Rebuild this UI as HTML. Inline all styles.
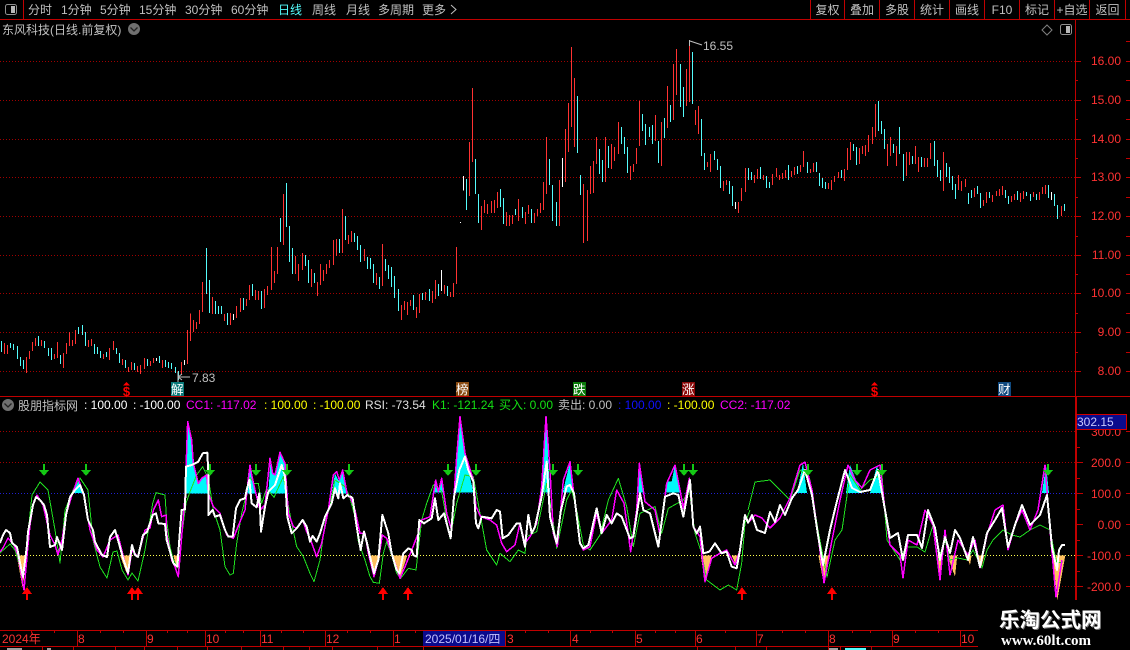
<!DOCTYPE html>
<html><head><meta charset="utf-8"><title>K</title>
<style>
html,body{margin:0;padding:0;background:#000;width:1130px;height:650px;overflow:hidden}
svg{display:block}
text{font-family:"Liberation Sans","WenQuanYi Zen Hei","Noto Sans CJK SC",sans-serif;font-size:12px;fill:#c0c0c0}
.r{fill:#ff3232;text-anchor:end}
.d{fill:#ff3232}
.c{text-anchor:middle}
</style></head><body>
<svg width="1130" height="650" viewBox="0 0 1130 650" xmlns="http://www.w3.org/2000/svg">
<rect width="1130" height="650" fill="#000"/>

<!-- grid -->
<g stroke="#a00000" stroke-dasharray="1 2" shape-rendering="crispEdges">
<path d="M0 61.5H1075M0 100.5H1075M0 139.5H1075M0 177.5H1075M0 216.5H1075M0 255.5H1075M0 293.5H1075M0 332.5H1075M0 371.5H1075M0 431.5H1075M0 462.5H1075M0 586.5H1075"/>
</g>
<path d="M0 493.5H1075" stroke="#2020d0" stroke-dasharray="1 2" shape-rendering="crispEdges"/>
<path d="M0 555.5H1075" stroke="#ffff50" stroke-dasharray="1 2" shape-rendering="crispEdges"/>

<!-- candles frame A -->
<g transform="translate(0,170) scale(.33333)" fill="none" stroke-width="3" shape-rendering="crispEdges">
<path stroke="#54fcfc" d="M5 513V546M32 519V534M41 522V540M53 528V567M62 561V588M71 570V597M116 498V528M134 513V534M146 534V558M155 534V570M182 555V582M236 471V492M248 465V495M257 486V528M284 522V552M293 531V552M302 543V564M320 546V561M349 534V552M358 549V579M376 570V594M403 579V600M442 567V588M478 558V579M496 570V591M505 576V594M514 579V597M526 591V609M535 603V630M619 234V372M628 330V429M646 393V432M655 408V432M664 408V432M682 429V465M730 384V420M757 342V378M784 363V417M841 144V216M859 39V171M868 168V276M877 234V312"/>
<path stroke="#ff3232" d="M14 519V552M23 525V552M80 561V609M89 543V567M98 516V543M107 504V528M125 510V528M164 552V567M173 516V564M191 549V594M200 519V552M209 486V528M218 510V528M227 480V522M266 510V531M275 507V528M311 552V567M329 534V570M340 513V540M367 567V585M385 591V606M394 576V600M412 588V606M421 585V612M433 564V597M451 573V588M460 564V579M487 570V594M544 576V612M562 480V582M571 430V513M580 450V486M589 456V477M598 420V462M607 336V426M637 381V432M673 432V453M691 429V465M709 408V444M721 384V426M739 387V408M748 345V390M766 360V390M775 363V390M793 357V414M802 348V375M814 231V360M823 303V339M832 231V312M850 72V225M886 258V312M895 282V333"/>
<path stroke="#fff" d="M469 564V573M553 570V585M700 432V450"/>
</g>
<!-- frame B -->
<g transform="translate(295,200) scale(.33333)" fill="none" stroke-width="3" shape-rendering="crispEdges">
<path stroke="#54fcfc" d="M31 165V198M40 180V249M58 219V249M133 117V159M151 48V120M178 99V126M187 108V150M196 135V186M217 171V207M226 174V207M235 192V249M253 231V267M271 177V213M280 195V237M289 201V261M298 228V294M310 267V333M355 285V330M382 279V300M403 267V303M430 252V288M457 258V288"/>
<path stroke="#ff3232" d="M22 159V210M49 207V261M67 246V288M76 192V255M85 210V243M94 192V222M103 180V204M115 120V195M124 117V168M142 27V159M160 105V132M169 93V126M208 147V183M244 219V255M262 132V258M319 315V360M328 303V330M337 306V345M346 300V318M364 321V354M373 282V339M391 276V300M412 273V309M421 240V297M448 255V282M466 276V291M475 249V291M484 141V252"/>
<path stroke="#fff" d="M439 210V273M496 66V69"/>
</g>
<!-- frame C -->
<g transform="translate(440,40) scale(.33333)" fill="none" stroke-width="3" shape-rendering="crispEdges">
<path stroke="#54fcfc" d="M79 417V510M106 357V462M115 462V549M181 447V501M190 474V552M226 507V525M247 501V534M274 507V549M328 357V435M337 435V543M349 486V558M412 168V339M421 405V465M478 327V402M487 360V426M505 318V384M544 261V312M553 291V342M562 321V399M607 222V273M616 252V315M628 261V291M637 255V312M655 303V369M673 234V294M691 195V246M721 72V201M730 141V231M757 36V192M784 237V348"/>
<path stroke="#ff3232" d="M88 306V468M97 144V366M124 498V570M133 480V519M142 492V522M154 483V519M163 480V519M172 456V504M199 516V558M208 525V558M217 525V552M235 477V543M256 516V552M265 495V522M283 519V549M292 507V528M301 489V519M310 426V510M319 291V462M358 420V558M376 267V426M385 189V336M394 21V261M403 114V321M430 432V609M442 450V603M451 378V462M460 363V459M469 291V372M496 291V426M514 312V387M523 321V363M535 246V342M571 378V420M580 372V396M589 324V372M598 183V318M646 225V303M664 246V378M682 138V264M700 72V240M709 27V165M739 87V198M748 0V186M766 210V255M775 198V282"/>
<path stroke="#fff" d="M70 408V452M367 354V441"/>
</g>
<!-- frame D -->
<g transform="translate(700,90) scale(.33333)" fill="none" stroke-width="3" shape-rendering="crispEdges">
<path stroke="#54fcfc" d="M13 189V240M43 183V210M52 207V240M61 228V294M88 273V312M97 288V348M145 234V270M154 246V270M181 231V267M199 258V294M208 276V294M265 225V270M292 228V252M322 216V249M349 216V246M358 249V288M367 264V294M376 276V297M424 240V264M460 162V183M469 171V225M535 33V123M544 93V132M553 117V177M580 162V189M598 111V192M610 192V273M637 198V222M664 201V231M703 153V228M712 210V261M721 240V273M739 219V261M748 231V279M757 258V300M766 282V327M805 309V342M814 300V324M832 288V312M841 309V354M868 306V324M916 300V324M925 318V342M952 303V330M979 306V318M991 312V333M1009 312V330M1045 285V324M1063 312V348M1072 345V387M1093 342V363"/>
<path stroke="#ff3232" d="M22 216V231M31 192V246M70 273V303M79 270V285M115 336V369M124 294V333M136 234V306M163 255V279M172 237V267M190 255V270M217 252V285M229 234V261M238 255V270M247 249V267M256 240V264M274 243V261M283 231V255M301 225V246M310 183V231M331 237V249M340 219V246M385 279V297M394 270V300M403 258V276M415 246V264M433 237V273M442 174V240M451 156V210M478 174V222M487 168V192M496 165V198M505 135V186M517 111V162M526 42V141M562 162V228M571 141V198M589 168V228M619 186V258M628 186V225M646 168V222M655 201V246M673 204V231M682 204V231M691 159V207M730 186V303M775 255V300M784 273V303M796 267V291M823 294V321M850 330V348M859 306V339M877 315V336M889 303V318M898 297V318M907 288V315M934 318V336M943 312V330M961 309V336M970 303V327M1000 306V321M1018 306V330M1027 291V312M1036 285V312M1084 348V378"/>
<path stroke="#fff" d="M106 336V357M1054 306V330"/>
</g>

<!-- indicator fills -->
<g shape-rendering="crispEdges">
<polygon fill="#00f8f8" points="73,493 78,478 84,493"/>
<g transform="translate(150,420) scale(.33333)" fill="#00f8f8">
<polygon points="107,220 113,5 125,60 130,130 145,190 155,175 170,165 175,220"/>
<polygon points="292,220 298,135 305,165 315,220"/>
<polygon points="355,220 362,115 368,160 378,165 390,97 405,130 412,220"/>
<polygon points="545,220 555,160 565,180 578,150 590,220"/>
</g>
<g transform="translate(350,410) scale(.33333)" fill="#00f8f8">
<polygon points="252,248 257,210 265,245 275,205 282,248"/>
<polygon points="312,248 330,20 345,130 370,248"/>
<polygon points="575,248 588,20 600,248"/>
<polygon points="638,248 660,155 672,248"/>
<polygon points="862,248 868,160 880,248"/>
<polygon points="945,248 952,215 965,215 975,165 990,248"/>
</g>
<polygon fill="#00f8f8" points="797,493 803,463 807,493"/>
<polygon fill="#00f8f8" points="846,493 850,465 856,480 862,493"/>
<polygon fill="#00f8f8" points="870,493 877,465 882,493"/>
<polygon fill="#00f8f8" points="1042,493 1046,465 1049,493"/>
<g fill="#ffc060">
<g transform="translate(0,530) scale(.33333)">
<polygon points="50,76 68,175 80,76"/><polygon points="360,76 380,130 390,76"/><polygon points="520,76 530,115 538,76"/>
</g>
<g transform="translate(350,410) scale(.33333)">
<polygon points="58,436 72,500 92,436"/><polygon points="125,436 150,505 172,436"/><polygon points="1052,436 1065,515 1085,436"/><polygon points="1145,436 1157,465 1168,436"/>
</g>
<g transform="translate(650,530) scale(.33333)">
<polygon points="505,76 522,165 540,76"/><polygon points="862,76 870,145 878,76"/><polygon points="892,76 915,140 922,76"/><polygon points="950,76 960,105 965,76"/><polygon points="985,76 993,115 1003,76"/><polygon points="1208,76 1222,210 1246,76"/>
</g>
</g>
</g>

<!-- indicator lines -->
<g fill="none" shape-rendering="crispEdges" stroke-linejoin="round">
<polyline stroke="#20e020" stroke-width="1" points="0,553 10,544 15,550 21,570 23,573 27,543 32,495 40,482 48,490 55,530 60,563 65,510 73,490 80,478 88,490 93,540 100,567 107,578 113,552 117,551 122,570 128,580 132,573 138,581 145,550 150,520"/>
<polyline stroke="#20e020" stroke-width="1" points="748,510 755,482 770,480 790,500 800,470 810,480 818,530 827,577 835,540 842,530 850,475 860,490 870,480 882,475 887,540 900,560 906,547 917,547 925,552 933,525 938,560 945,540 950,560 958,558 967,560 973,550 982,568 987,550 993,540 1003,530 1012,535 1020,537 1030,530 1040,525 1050,530 1055,555 1057,563 1063,562"/>
<g transform="translate(150,420) scale(.33333)">
<polyline stroke="#20e020" stroke-width="3" points="0,300 8,250 18,218 45,225 50,300 60,380 70,420 85,445 95,350 108,250 120,215 140,165 158,140 175,175 190,270 210,330 225,440 240,465 250,460 260,370 275,280 290,220 300,172 312,190 325,190 335,250 350,205 372,232 400,170 412,240 425,310 440,380 460,410 480,460 492,485 510,420 525,310 545,230 555,180 585,200 600,232"/>
<polyline stroke="#ff00ff" stroke-width="4.5" points="0,325 10,270 25,240 35,290 48,285 50,340 65,420 75,440 85,470 95,350 102,268 105,230 113,5 125,60 130,130 145,190 155,175 170,165 175,220 190,260 210,280 230,345 250,355 268,310 285,270 295,175 300,135 305,165 315,210 330,270 345,255 360,115 368,160 375,165 390,97 405,130 415,280 430,320 440,325 458,300 470,335 480,355 500,410 515,370 535,270 550,165 560,155 568,180 578,150 592,225 600,232"/>
<polyline stroke="#fff" stroke-width="6" points="0,310 8,285 18,280 25,310 45,312 50,360 60,395 70,430 82,440 90,330 95,270 105,268 108,140 125,135 145,125 158,100 172,98 175,160 175,285 188,270 195,290 210,285 225,330 235,350 248,350 258,265 270,240 285,235 290,210 298,180 305,250 320,262 328,220 333,335 345,260 355,215 375,195 395,135 405,170 412,290 425,340 440,325 458,300 470,320 480,365 488,348 500,365 510,340 525,290 545,250 555,205 565,235 570,190 580,235 592,225 600,232"/>
</g>
<g transform="translate(350,410) scale(.33333)">
<polyline stroke="#20e020" stroke-width="3" points="0,265 15,320 25,395 45,450 60,500 70,517 88,520 100,430 110,395 125,435 140,490 152,505 175,475 198,480 215,330 230,280 250,225 275,245 300,385 320,280 345,195 370,200 390,310 410,420 440,465 450,430 480,455 505,420 525,430 530,380 560,365 590,220 605,300 620,415 650,270 665,240 680,300 700,405 720,420 750,375 775,270 805,205 830,290 850,410 870,310 915,290 935,370 955,295 1000,270 1018,240 1035,370 1055,430 1070,510 1110,540 1135,525 1160,540 1175,460 1185,340 1200,300"/>
<polyline stroke="#ff00ff" stroke-width="4.5" points="0,258 15,300 30,370 45,370 55,430 72,500 85,450 97,375 110,385 125,430 150,505 165,470 185,420 205,370 215,330 240,320 257,210 265,245 275,205 290,310 305,360 320,140 330,20 345,130 370,210 378,290 392,320 420,330 440,345 455,400 470,425 495,405 510,340 525,400 540,380 560,340 575,230 588,20 600,180 610,370 622,410 640,210 660,155 670,240 690,400 700,420 720,410 740,310 755,370 785,330 800,240 822,280 842,425 860,300 868,160 885,275 915,300 930,375 950,220 975,165 990,240 1000,295 1018,205 1030,350 1050,380 1065,515 1085,445 1110,430 1130,420 1155,465 1170,420 1185,320 1195,340"/>
<polyline stroke="#fff" stroke-width="6" points="0,258 8,265 20,350 32,420 42,365 50,395 60,440 72,490 85,450 97,315 115,370 125,430 140,480 148,490 160,430 175,415 185,420 190,435 200,440 208,330 222,340 245,325 255,265 265,330 282,310 302,385 312,260 328,180 345,140 355,180 370,215 378,340 385,355 395,320 425,325 440,300 450,305 458,385 475,375 500,340 510,340 525,410 535,315 545,370 555,350 575,260 590,155 600,320 620,400 632,305 650,230 660,225 672,250 690,400 700,415 715,405 740,295 755,370 770,315 785,340 800,310 815,320 840,385 850,380 870,250 880,300 900,310 925,410 945,260 970,250 985,255 1000,320 1020,210 1030,350 1040,370 1050,350 1060,430 1078,425 1095,400 1115,430 1130,425 1145,470 1160,475 1170,420 1185,315 1195,340"/>
</g>
<polyline stroke="#ff00ff" stroke-width="1.5" points="0,552 3,548 8,538 14,545 18,555 24,590 28,545 30,525 33,505 37,495 43,505 50,535 55,545 58,555 62,540 66,515 72,495 78,478 84,495 90,530 97,550 103,557 110,540 118,535 123,555 128,575 132,550 138,557 145,530 150,528"/>
<polyline stroke="#fff" stroke-width="2" points="0,543 3,535 6,530 10,533 12,543 17,547 20,563 23,577 27,545 28,532 33,505 36,497 40,500 44,505 47,515 50,547 55,545 57,537 62,550 66,515 70,497 75,490 80,485 84,495 88,520 93,530 95,542 102,555 107,557 110,537 115,530 118,540 123,558 128,573 132,545 135,555 138,557 143,535 147,532 150,523"/>
<polyline stroke="#ff00ff" stroke-width="1.5" points="748,523 755,515 762,518 770,528 780,518 790,498 800,465 805,462 812,490 818,535 824,583 832,540 840,500 848,465 855,480 862,488 870,470 880,465 885,510 890,545 900,555 903,578 908,540 917,545 925,510 933,525 940,580 945,530 950,575 958,540 968,555 975,540 980,568 987,535 995,510 1003,505 1008,550 1015,525 1022,510 1030,530 1038,510 1045,465 1050,530 1056,597 1062,560"/>
<polyline stroke="#fff" stroke-width="2" points="748,523 752,515 757,530 765,533 770,512 775,522 780,505 785,515 792,498 798,490 805,470 812,495 818,535 823,565 830,530 836,505 845,470 852,488 860,492 870,490 878,470 885,510 890,538 898,533 903,560 908,535 917,535 922,548 928,510 935,528 940,560 945,537 950,553 955,530 960,538 968,560 973,537 980,567 987,533 995,520 1002,508 1008,547 1015,525 1022,505 1030,525 1040,515 1047,495 1052,547 1057,570 1059,550 1062,545 1065,545"/>
</g>

<!-- arrows -->
<g fill="#14c814" shape-rendering="crispEdges">
<path d="M43 464h2v6h4l-5 6-5-6h4z"/><path d="M85 464h2v6h4l-5 6-5-6h4z"/><path d="M209 464h2v6h4l-5 6-5-6h4z"/><path d="M255 464h2v6h4l-5 6-5-6h4z"/><path d="M286 464h2v6h4l-5 6-5-6h4z"/><path d="M348 464h2v6h4l-5 6-5-6h4z"/><path d="M447 464h2v6h4l-5 6-5-6h4z"/><path d="M475 464h2v6h4l-5 6-5-6h4z"/><path d="M552 464h2v6h4l-5 6-5-6h4z"/><path d="M577 464h2v6h4l-5 6-5-6h4z"/><path d="M683 464h2v6h4l-5 6-5-6h4z"/><path d="M692 464h2v6h4l-5 6-5-6h4z"/><path d="M807 464h2v6h4l-5 6-5-6h4z"/><path d="M856 464h2v6h4l-5 6-5-6h4z"/><path d="M881 464h2v6h4l-5 6-5-6h4z"/><path d="M1047 464h2v6h4l-5 6-5-6h4z"/>
</g>
<g fill="#ff0000" shape-rendering="crispEdges">
<path d="M27 587l5 7h-4v6h-2v-6h-4z"/><path d="M132 587l5 7h-4v6h-2v-6h-4z"/><path d="M138 587l5 7h-4v6h-2v-6h-4z"/><path d="M383 587l5 7h-4v6h-2v-6h-4z"/><path d="M408 587l5 7h-4v6h-2v-6h-4z"/><path d="M742 587l5 7h-4v6h-2v-6h-4z"/><path d="M832 587l5 7h-4v6h-2v-6h-4z"/>
</g>

<!-- frame lines -->
<g stroke="#c00000" fill="none" shape-rendering="crispEdges">
<path d="M0 19.5H1130M0 396.5H1130M23.5 0V19M810.5 0V19M844.5 0V19M879.5 0V19M914.5 0V19M949.5 0V19M984.5 0V19M1019.5 0V19M1054.5 0V19M1089.5 0V19M1125.5 0V19"/>
<path d="M1075.5 19V396"/>
<path d="M1076 396V600" stroke-width="2"/>
<path d="M1075 61.5h6M1075 100.5h6M1075 139.5h6M1075 177.5h6M1075 216.5h6M1075 255.5h6M1075 293.5h6M1075 332.5h6M1075 371.5h6M1077 462.5h6M1077 493.5h6M1077 524.5h6M1077 555.5h6M1077 586.5h6"/>
<path d="M1075 80.5h3M1075 119.5h3M1075 158.5h3M1075 197.5h3M1075 236.5h3M1075 274.5h3M1075 313.5h3M1075 352.5h3M1077 447.5h3M1077 478.5h3M1077 509.5h3M1077 540.5h3M1077 571.5h3"/>
<path d="M1126 41.5h4M1126 61.5h4M1126 80.5h4M1126 100.5h4M1126 119.5h4M1126 139.5h4M1126 158.5h4M1126 177.5h4M1126 197.5h4M1126 216.5h4M1126 236.5h4M1126 255.5h4M1126 274.5h4M1126 293.5h4M1126 313.5h4M1126 332.5h4M1126 352.5h4M1126 371.5h4M1126 431.5h4M1126 462.5h4M1126 493.5h4M1126 524.5h4M1126 555.5h4M1126 586.5h4"/>
<path d="M0 630.5H978M0 646.5H978"/>
<path d="M77.5 630V646M146.5 630V646M205.5 630V646M260.5 630V646M325.5 630V646M393.5 630V646M505.5 630V646M570.5 630V646M635.5 630V646M695.5 630V646M756.5 630V646M828.5 630V646M892.5 630V646M960.5 630V646"/>
<path d="M31.5 630v3M54.5 630v3M100.5 630v3M123.5 630v3M167.5 630v3M187.5 630v3M225.5 630v3M243.5 630v3M281.5 630v3M303.5 630v3M347.5 630v3M370.5 630v3M415.5 630v3M525.5 630v3M548.5 630v3M590.5 630v3M612.5 630v3M655.5 630v3M675.5 630v3M725.5 630v3M782.5 630v3M805.5 630v3M852.5 630v3M870.5 630v3M915.5 630v3M938.5 630v3"/>
<path d="M42.5 646V650M73.5 646V650M115.5 646V650M144.5 646V650M177.5 646V650M207.5 646V650M241.5 646V650M283.5 646V650M309.5 646V650M332.5 646V650M377.5 646V650M423.5 646V650M697.5 646V650M735.5 646V650M766.5 646V650M828.5 646V650M840.5 646V650M871.5 646V650"/>
</g>
<rect x="7" y="648" width="15" height="2" fill="#a0a0a0" shape-rendering="crispEdges"/>
<rect x="47" y="648" width="4" height="2" fill="#a0a0a0" shape-rendering="crispEdges"/>
<rect x="829" y="648" width="9" height="2" fill="#a0a0a0" shape-rendering="crispEdges"/>
<rect x="845" y="648" width="21" height="2" fill="#54fcfc" shape-rendering="crispEdges"/>

<!-- toolbar -->
<rect x="5.5" y="4.5" width="11" height="10" rx="2" fill="none" stroke="#909090"/>
<rect x="11" y="6" width="4" height="7" fill="#b8b8b8"/>
<text x="28" y="14">分时</text>
<text x="61" y="14">1分钟</text>
<text x="100" y="14">5分钟</text>
<text x="139" y="14">15分钟</text>
<text x="185" y="14">30分钟</text>
<text x="231" y="14">60分钟</text>
<text x="278" y="14" style="fill:#54fcfc">日线</text>
<text x="312" y="14">周线</text>
<text x="346" y="14">月线</text>
<text x="378" y="14">多周期</text>
<text x="422" y="14">更多</text>
<path d="M451 5l5 4.5-5 4.5" fill="none" stroke="#c0c0c0"/>
<text class="c" x="827.5" y="14">复权</text>
<text class="c" x="862" y="14">叠加</text>
<text class="c" x="897" y="14">多股</text>
<text class="c" x="932" y="14">统计</text>
<text class="c" x="967" y="14">画线</text>
<text class="c" x="1002" y="14">F10</text>
<text class="c" x="1037" y="14">标记</text>
<text class="c" x="1072" y="14">+自选</text>
<text class="c" x="1107.5" y="14">返回</text>

<!-- title -->
<text x="2" y="34">东风科技(日线.前复权)</text>
<circle cx="134" cy="29" r="6" fill="#707070"/>
<path d="M130.5 27.5l3.5 3.5 3.5-3.5" fill="none" stroke="#222" stroke-width="1.3"/>
<path d="M1047 25l5 5-5 5-5-5z" fill="none" stroke="#808080"/>
<rect x="1060.5" y="24.5" width="11" height="10" rx="2" fill="none" stroke="#909090"/>
<rect x="1066" y="26" width="4" height="7" fill="#b8b8b8"/>

<!-- price labels -->
<text class="r" x="1121" y="65">16.00</text>
<text class="r" x="1121" y="104">15.00</text>
<text class="r" x="1121" y="143">14.00</text>
<text class="r" x="1121" y="181">13.00</text>
<text class="r" x="1121" y="220">12.00</text>
<text class="r" x="1121" y="259">11.00</text>
<text class="r" x="1121" y="297">10.00</text>
<text class="r" x="1121" y="336">9.00</text>
<text class="r" x="1121" y="375">8.00</text>

<!-- high/low -->
<path d="M689.5 46V40M690 41l12 4" fill="none" stroke="#c0c0c0"/>
<text x="703" y="50">16.55</text>
<path d="M178 377h12M178 377l4-3M178 377l4 3M178 372v10" fill="none" stroke="#c0c0c0"/>
<text x="192" y="382">7.83</text>

<!-- markers -->
<text x="126.5" y="396" class="c" style="fill:#ff0000;font-size:13px;font-weight:bold">$</text>
<path d="M126.5 382l3.5 3.5h-7z" fill="#ff0000"/>
<text x="874.5" y="396" class="c" style="fill:#ff0000;font-size:13px;font-weight:bold">$</text>
<path d="M874.5 382l3.5 3.5h-7z" fill="#ff0000"/>
<rect x="171" y="382" width="13" height="14" fill="#0a7a7a"/><text x="171" y="394" style="fill:#fff;font-size:12.5px">解</text>
<rect x="456" y="382" width="13" height="14" fill="#8a4a10"/><text x="456" y="394" style="fill:#fff;font-size:12.5px">榜</text>
<rect x="573" y="382" width="13" height="14" fill="#0a7a0a"/><text x="573" y="394" style="fill:#fff;font-size:12.5px">跌</text>
<rect x="682" y="382" width="13" height="14" fill="#8a0a0a"/><text x="682" y="394" style="fill:#fff;font-size:12.5px">涨</text>
<rect x="998" y="382" width="13" height="14" fill="#104a80"/><text x="998" y="394" style="fill:#fff;font-size:12.5px">财</text>

<!-- indicator header -->
<circle cx="8" cy="405" r="6" fill="#707070"/>
<path d="M4.5 403.5l3.5 3.5 3.5-3.5" fill="none" stroke="#222" stroke-width="1.3"/>
<text x="18" y="410">股朋指标网</text>
<text x="84" y="409" style="fill:#fff">: 100.00</text>
<text x="133" y="409" style="fill:#fff">: -100.00</text>
<text x="186" y="409" style="fill:#ff00ff">CC1: -117.02</text>
<text x="264" y="409" style="fill:#ffff00">: 100.00</text>
<text x="313" y="409" style="fill:#ffff00">: -100.00</text>
<text x="365" y="409" style="fill:#e0e0e0">RSI: -73.54</text>
<text x="432" y="409" style="fill:#14e014">K1: -121.24</text>
<text x="499" y="409" style="fill:#14e014">买入: 0.00</text>
<text x="558" y="409">卖出: 0.00</text>
<text x="618" y="409" style="fill:#1010ff">: 100.00</text>
<text x="667" y="409" style="fill:#ffff00">: -100.00</text>
<text x="720" y="409" style="fill:#ff00ff">CC2: -117.02</text>

<!-- indicator axis labels -->
<text class="r" x="1121" y="436">300.0</text>
<text class="r" x="1121" y="467">200.0</text>
<text class="r" x="1121" y="498">100.0</text>
<text class="r" x="1121" y="529">0.00</text>
<text class="r" x="1121" y="560">-100.0</text>
<text class="r" x="1121" y="591">-200.0</text>
<rect x="1076.5" y="414.5" width="50" height="15" fill="#0a0a8c" stroke="#d00000"/>
<text x="1077" y="426" style="fill:#c8c8ff">302.15</text>

<!-- dates -->
<text class="d" x="2" y="643">2024年</text>
<text class="d" x="78" y="643">8</text>
<text class="d" x="147" y="643">9</text>
<text class="d" x="206" y="643">10</text>
<text class="d" x="261" y="643">11</text>
<text class="d" x="326" y="643">12</text>
<text class="d" x="394" y="643">1</text>
<rect x="423" y="631" width="82" height="15" fill="#0a0a8c"/>
<text x="425" y="643" style="fill:#c0c0ff">2025/01/16/四</text>
<text class="d" x="507" y="643">3</text>
<text class="d" x="572" y="643">4</text>
<text class="d" x="636" y="643">5</text>
<text class="d" x="696" y="643">6</text>
<text class="d" x="757" y="643">7</text>
<text class="d" x="829" y="643">8</text>
<text class="d" x="893" y="643">9</text>
<text class="d" x="961" y="643">10</text>

<!-- watermark -->
<rect x="978" y="600" width="152" height="50" fill="#000"/>
<text x="1000" y="628" style="font-family:'Noto Sans CJK SC',sans-serif;font-size:20.5px;font-weight:bold;fill:#777">乐淘公式网</text>
<text x="999" y="627" style="font-family:'Noto Sans CJK SC',sans-serif;font-size:20.5px;font-weight:bold;fill:#fff">乐淘公式网</text>
<text x="1001" y="645" textLength="90" lengthAdjust="spacingAndGlyphs" style="font-family:'Liberation Serif',serif;font-size:15px;font-weight:bold;fill:#fff">www.60lt.com</text>
</svg>
</body></html>
